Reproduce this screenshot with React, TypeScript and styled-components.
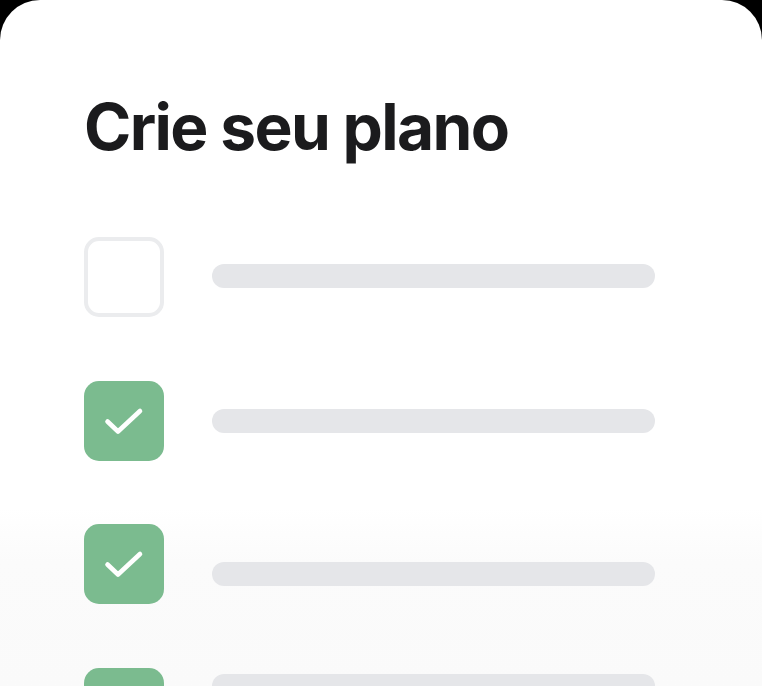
import React from 'react';
import styled, { createGlobalStyle } from 'styled-components';

const GlobalStyle = createGlobalStyle`
  html, body {
    margin: 0;
    padding: 0;
    background: #000;
  }
  body {
    font-family: Inter, "Noto Sans", sans-serif;
    -webkit-font-smoothing: antialiased;
  }
`;

const Card = styled.main`
  box-sizing: border-box;
  width: 762px;
  height: 686px;
  overflow: hidden;
  border-radius: 40px 40px 0 0;
  background: linear-gradient(180deg, #ffffff 0%, #ffffff 74%, #fbfbfb 82%, #fafafa 100%);
  padding: 95px 107px 0 84px;
`;

const Title = styled.h1`
  margin: 0 0 78px;
  font-size: 64px;
  line-height: 1;
  font-weight: 700;
  letter-spacing: -1.65px;
  color: #1b1b1d;
`;

const List = styled.ul`
  list-style: none;
  margin: 0;
  padding: 0;
  display: flex;
  flex-direction: column;
  gap: 63.5px;
`;

const Row = styled.li`
  display: flex;
  align-items: flex-start;
  gap: 48px;
`;

const Box = styled.span<{ $checked: boolean }>`
  box-sizing: border-box;
  flex: none;
  width: 80px;
  height: 80px;
  border-radius: 15px;
  display: flex;
  align-items: center;
  justify-content: center;
  background: ${(p) => (p.$checked ? '#7bbb8f' : '#fff')};
  border: ${(p) => (p.$checked ? 'none' : '4px solid #ebecee')};
`;

const Bar = styled.span<{ $offset: number }>`
  flex: 1;
  height: 24px;
  margin-top: ${(p) => p.$offset}px;
  border-radius: 12px;
  background: #e5e6e9;
`;

const Check = () => (
  <svg width="40" height="40" viewBox="0 0 40 40" fill="none">
    <path
      d="M3.5 20.5 L14 30.5 L36 10"
      stroke="#fff"
      strokeWidth="4.6"
      strokeLinecap="round"
      strokeLinejoin="round"
    />
  </svg>
);

const items = [
  { checked: false, offset: 27 },
  { checked: true, offset: 28 },
  { checked: true, offset: 38 },
  { checked: true, offset: 6 },
];

export default function App() {
  return (
    <>
      <GlobalStyle />
      <Card>
        <Title>Crie seu plano</Title>
        <List>
          {items.map((item, i) => (
            <Row key={i}>
              <Box $checked={item.checked}>{item.checked && <Check />}</Box>
              <Bar $offset={item.offset} />
            </Row>
          ))}
        </List>
      </Card>
    </>
  );
}
